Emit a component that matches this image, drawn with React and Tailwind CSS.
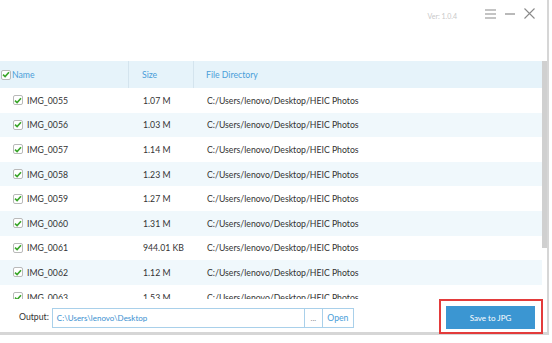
import React from 'react';

const files = [
  ['IMG_0055', '1.07 M'],
  ['IMG_0056', '1.03 M'],
  ['IMG_0057', '1.14 M'],
  ['IMG_0058', '1.23 M'],
  ['IMG_0059', '1.27 M'],
  ['IMG_0060', '1.31 M'],
  ['IMG_0061', '944.01 KB'],
  ['IMG_0062', '1.12 M'],
  ['IMG_0063', '1.53 M'],
];

const Check = () => (
  <span className="w-[10px] h-[10px] border border-[#b9b9b9] rounded-[2px] bg-white flex items-center justify-center flex-shrink-0">
    <svg width="8" height="7" viewBox="0 0 8 7">
      <path d="M1 3.6 L3.1 5.6 L7 1.2" fill="none" stroke="#3aa52a" strokeWidth="1.6" />
    </svg>
  </span>
);

export default function App() {
  return (
    <div className="w-[552px] h-[343px] bg-white overflow-hidden font-['Lato','Liberation_Sans',sans-serif] text-[8.7px] text-[#333]">
      <div className="w-[549px] h-[335px] flex flex-col border-r-2 border-b-[3px] border-[#d6d6d6]">
        <div className="h-[61px] flex items-start justify-end pt-[8px] pr-[12px] flex-shrink-0">
          <span className="text-[7px] text-[#c8c8c8] mt-[3px] mr-[28px]">Ver: 1.0.4</span>
          <svg width="11" height="10" viewBox="0 0 11 10" className="mt-[1px]">
            <path d="M0 1 H11 M0 5 H11 M0 9 H11" stroke="#8a8a8a" strokeWidth="1.2" />
          </svg>
          <svg width="10" height="10" viewBox="0 0 10 10" className="mt-[1px] ml-[9px]">
            <path d="M0 5 H10" stroke="#8a8a8a" strokeWidth="1.2" />
          </svg>
          <svg width="11" height="11" viewBox="0 0 11 11" className="ml-[9px]">
            <path d="M0.5 0.5 L10.5 10.5 M10.5 0.5 L0.5 10.5" stroke="#8a8a8a" strokeWidth="1.1" />
          </svg>
        </div>

        <div className="h-[238px] flex flex-shrink-0 overflow-hidden">
          <div className="flex-1 flex flex-col">
            <div className="h-[27px] bg-[#e6f3fa] flex items-center text-[#4a9ed9] flex-shrink-0">
              <div className="w-[128px] flex items-center pl-[1px] gap-[1px] h-full">
                <Check />
                <span>Name</span>
              </div>
              <div className="w-[65px] h-full border-l border-[#d4e4ee] flex items-center pl-[13px]">Size</div>
              <div className="flex-1 h-full border-l border-[#d4e4ee] flex items-center pl-[12px]">File Directory</div>
            </div>
            {files.map(([name, size], i) => (
              <div
                key={name}
                className={`h-[24.6px] flex items-center flex-shrink-0 whitespace-nowrap ${i % 2 === 1 ? 'bg-[#f0f8fc]' : 'bg-white'}`}
              >
                <div className="w-[128px] flex items-center pl-[13px] gap-[4px]">
                  <Check />
                  <span>{name}</span>
                </div>
                <div className="w-[65px] pl-[15px]">{size}</div>
                <div className="flex-1 pl-[14px]">C:/Users/lenovo/Desktop/HEIC Photos</div>
              </div>
            ))}
          </div>
          <div className="w-[5px] flex flex-col">
            <div className="h-[187px] bg-[#d0d0d0]" />
          </div>
        </div>

        <div className="flex-1 flex items-center pl-[19px] pr-[4px]">
          <span className="mr-[3px]">Output:</span>
          <div className="h-[20px] mt-[3px] flex border border-[#a9d0ea]">
            <div className="w-[251px] flex items-center pl-[4px] text-[8px] text-[#3a8fd0]">C:\Users\lenovo\Desktop</div>
            <div className="w-[18px] border-l border-[#a9d0ea] flex items-center justify-center text-[8px] text-[#888]">...</div>
            <div className="w-[31px] border-l border-[#a9d0ea] flex items-center justify-center text-[#4a9ed9]">Open</div>
          </div>
          <div className="ml-auto self-end border-2 border-[#e33b3b] pl-[5px] pr-[6px] pt-[5px] pb-[3px]">
            <div className="w-[89px] h-[23px] bg-[#3b96d2] flex items-center justify-center text-white text-[8px]">Save to JPG</div>
          </div>
        </div>
      </div>
    </div>
  );
}
